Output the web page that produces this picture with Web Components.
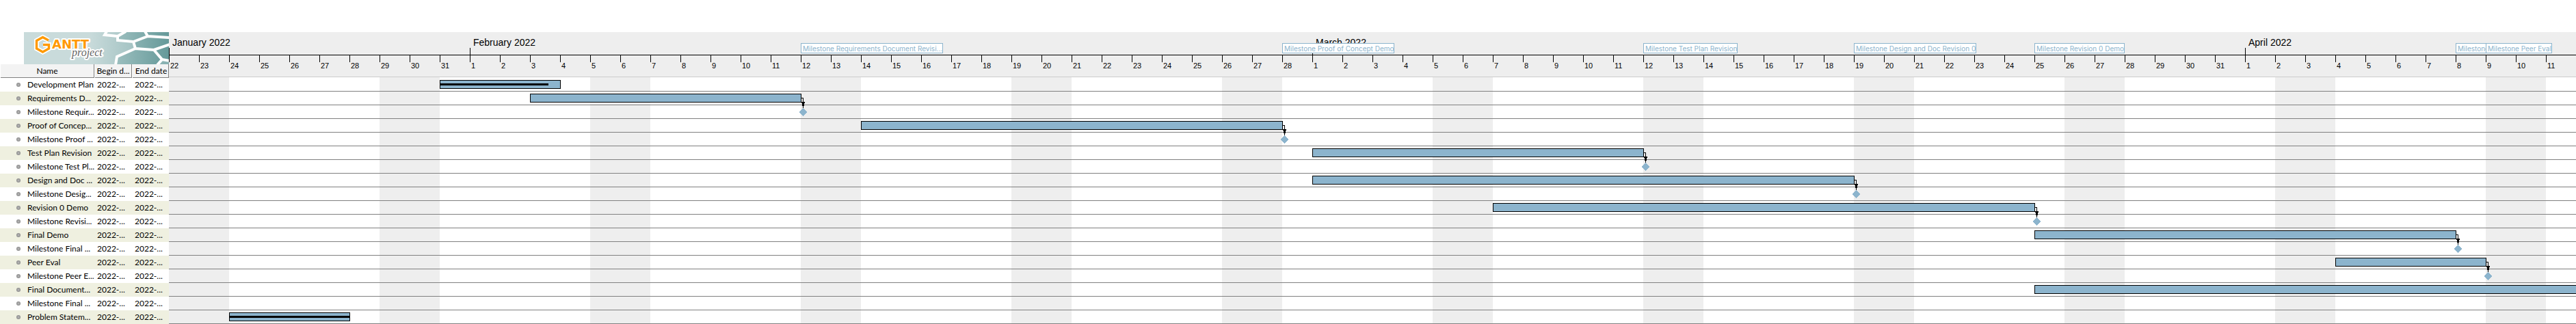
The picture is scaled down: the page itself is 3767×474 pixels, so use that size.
<!DOCTYPE html>
<html lang="en">
<head>
<meta charset="utf-8">
<title>Gantt chart</title>
<style>
  body { margin: 0; background: #fff; font-family: "Liberation Sans", Arial, sans-serif; color: #000; }
</style>
</head>
<body>
<gantt-app></gantt-app>

<script>
const DAYS = 80;
const MONTHS = [
  { name: 'January 2022', first: 22, days: 10 },
  { name: 'February 2022', first: 1, days: 28 },
  { name: 'March 2022', first: 1, days: 31 },
  { name: 'April 2022', first: 1, days: 11 },
];
// start and end are day offsets from the first day of the chart
const TASKS = [
  { name: 'Development Plan', start: 9, end: 13, progress: 90 },
  { name: 'Requirements D...', start: 12, end: 21 },
  { name: 'Milestone Requir...', at: 21, flag: 'Milestone Requirements Document Revisi...' },
  { name: 'Proof of Concep...', start: 23, end: 37 },
  { name: 'Milestone Proof ...', at: 37, flag: 'Milestone Proof of Concept Demo' },
  { name: 'Test Plan Revision', start: 38, end: 49 },
  { name: 'Milestone Test Pl...', at: 49, flag: 'Milestone Test Plan Revision' },
  { name: 'Design and Doc ...', start: 38, end: 56 },
  { name: 'Milestone Desig...', at: 56, flag: 'Milestone Design and Doc Revision 0' },
  { name: 'Revision 0 Demo', start: 44, end: 62 },
  { name: 'Milestone Revisi...', at: 62, flag: 'Milestone Revision 0 Demo' },
  { name: 'Final Demo', start: 62, end: 76 },
  { name: 'Milestone Final ...', at: 76, flag: 'Milestone' },
  { name: 'Peer Eval', start: 72, end: 77 },
  { name: 'Milestone Peer E...', at: 77, flag: 'Milestone Peer Eval' },
  { name: 'Final Document...', start: 62, end: 80 },
  { name: 'Milestone Final ...' },
  { name: 'Problem Statem...', start: 2, end: 6, progress: 100 },
];

class GanttLogo extends HTMLElement {
  constructor() {
    super();
    this.attachShadow({ mode: 'open' }).innerHTML = `
      <style>
        :host { display: block; height: 47px; }
        svg { display: block; }
        .word { font: bold 18px "DejaVu Sans", sans-serif; fill: #ff9900; }
        .sub { font: italic 16px "Liberation Serif", serif; fill: #666; }
        text { stroke: #fff; stroke-width: 4px; stroke-linejoin: round; paint-order: stroke; }
      </style>
      <svg width="212" height="47" viewBox="0 0 212 47" role="img" aria-label="GanttProject">
        <defs>
          <linearGradient id="sky"><stop offset=".45" stop-color="#c9dbdb"/><stop offset="1" stop-color="#86b0b0"/></linearGradient>
          <linearGradient id="cell"><stop offset="0" stop-color="#9cbfbf"/><stop offset="1" stop-color="#659999"/></linearGradient>
        </defs>
        <rect width="212" height="47" fill="url(#sky)"/>
        <path fill="url(#cell)" d="M148 0H177L181 6L160 14L137 12V6ZM181 6L212 7V18L190 26L163 24L160 14ZM136 36L163 24L190 26L202 40L195 47H134ZM177 0H212V7L181 6ZM190 26L212 18V42L202 40Z"/>
        <path fill="none" stroke="#fff" stroke-width="4" d="M121 -1L118 4L137 6M149 -1L137 6V12L160 14L181 6L177 -1M181 6L213 8M160 14L163 24L190 26L213 18M163 24L136 36L134 48M190 26L202 40L195 48M202 40L213 42"/>
        <g fill="none" stroke-linejoin="miter">
          <path id="g" stroke="#fff" stroke-width="7" d="M36 12L27.500 7.500L18.500 12.500V24L27.500 29L36.500 24V18.500H28"/>
          <path stroke="#ff9900" stroke-width="3.400" d="M36 12L27.500 7.500L18.500 12.500V24L27.500 29L36.500 24V18.500H28"/>
        </g>
        <text class="sub" x="70" y="35">project</text>
        <text class="word" x="41" y="24">ANTT</text>
      </svg>`;
  }
}

class TaskTable extends HTMLElement {
  constructor() {
    super();
    this.attachShadow({ mode: 'open' }).innerHTML = `
      <style>
        :host { display: block; font: 12px/20px Lato, "Open Sans", sans-serif; }
        table { width: 100%; table-layout: fixed; border-collapse: collapse; }
        .name { width: 138px; }
        .begin { width: 55px; }
        th, td { padding: 0; height: 20px; white-space: nowrap; overflow: hidden; text-align: left; }
        th { font-weight: normal; }
        th div { box-sizing: border-box; height: 20px; line-height: 20px; text-align: center;
          background: #f3f3f3; border: solid #808080; border-width: 0 1px 1px 0; margin-left: 1px; }
        th:last-child div { text-indent: 2px; }
        td { padding-left: 4px; }
        td:first-child { padding-left: 24px; }
        td i { display: inline-block; width: 6px; height: 6px; margin-right: 10px; border-radius: 50%;
          vertical-align: 1px; background: radial-gradient(#bbb, #777); }
        tbody tr:nth-child(even) { background: #eff0e0; }
      </style>
      <table>
        <colgroup><col class="name"><col class="begin"><col></colgroup>
        <thead><tr><th><div>Name</div></th><th><div>Begin d...</div></th><th><div>End date</div></th></tr></thead>
        <tbody>${TASKS.map(t => `<tr><td><i></i>${t.name}</td><td>2022-...</td><td>2022-...</td></tr>`).join('')}</tbody>
      </table>`;
  }
}

class TimeAxis extends HTMLElement {
  constructor() {
    super();
    const numbers = MONTHS.flatMap(m => Array.from({ length: m.days }, (_, i) => m.first + i));
    this.attachShadow({ mode: 'open' }).innerHTML = `
      <style>
        :host { display: block; position: relative; background: #eee; border-bottom: 1px solid #ccc; }
        .grid { display: grid; grid-template-columns: repeat(${DAYS}, minmax(0, 1fr)); }
        .months { height: 33px; border-bottom: 1px solid #000; }
        .months > div { display: flex; gap: 4px; font-size: 14px; line-height: 16px; white-space: nowrap; }
        .months > div::before { content: ""; width: 1px; height: 10px; background: #000; align-self: flex-end; }
        .months span { padding-top: 7px; }
        .days { height: 31px; font-size: 11px; line-height: 12px; }
        .days > div { display: flex; gap: 1px; }
        .days > div::before { content: ""; width: 1px; height: 10px; background: #000; }
        .days span { padding-top: 9px; }
        .flags { position: absolute; inset: 16px 0 auto; }
        .flags > div { grid-row: 1; width: max-content; height: 13px; padding-left: 2px; border: 1px solid #8cb4cd;
          background: #fff; color: #8cb4cd; font: 10px/15px Inter, sans-serif; white-space: nowrap; }
      </style>
      <div class="grid months">${MONTHS.map(m => `<div style="grid-column: span ${m.days}"><span>${m.name}</span></div>`).join('')}</div>
      <div class="grid days">${numbers.map(n => `<div><span>${n}</span></div>`).join('')}</div>
      <div class="grid flags">${TASKS.filter(t => t.flag).map(t => `<div style="grid-column: ${t.at + 1}">${t.flag}</div>`).join('')}</div>`;
  }
}

class TaskBar extends HTMLElement {
  constructor() {
    super();
    this.attachShadow({ mode: 'open' }).innerHTML = `
      <style>
        :host { display: flex; align-items: center; box-sizing: border-box; height: 13px; margin: 3px -1px 0 0;
          background: #8cb4cd; border: 1px solid #000; }
        div { height: 3px; background: #000; }
      </style>
      <div></div>`;
  }
  connectedCallback() {
    this.shadowRoot.querySelector('div').style.width = (this.getAttribute('progress') || 0) + '%';
  }
}

class MilestoneMark extends HTMLElement {
  constructor() {
    super();
    this.attachShadow({ mode: 'open' }).innerHTML = `
      <style>
        :host { display: block; margin: -12px 0 0 -4px; }
        svg { display: block; }
      </style>
      <svg width="14" height="28" viewBox="0 0 14 28" shape-rendering="crispEdges">
        <path d="M5 1h3v15h-1v-14h-2z"/>
        <path d="M5 7h5v2h-1v4h-3v-4h-1z"/>
        <path fill="#8cb4cd" d="M7 16L13 22L7 28L1 22Z"/>
      </svg>`;
  }
}

class TaskRows extends HTMLElement {
  constructor() {
    super();
    const item = t => t.at ? `<milestone-mark style="grid-column: ${t.at + 1}"></milestone-mark>`
      : t.end ? `<task-bar progress="${t.progress || 0}" style="grid-column: ${t.start + 1} / ${t.end + 1}"></task-bar>` : '';
    this.attachShadow({ mode: 'open' }).innerHTML = `
      <style>
        :host { display: block; padding-top: 1px; overflow: hidden;
          background: repeating-linear-gradient(90deg, #eee 0 2.5%, #fff 2.5% 8.75%); }
        .row { display: grid; grid-template-columns: repeat(${DAYS}, minmax(0, 1fr)); align-items: start;
          box-sizing: border-box; height: 20px; border-bottom: 1px solid #808080; }
      </style>
      ${TASKS.map(t => `<div class="row">${item(t)}</div>`).join('')}`;
  }
}

class GanttApp extends HTMLElement {
  constructor() {
    super();
    this.attachShadow({ mode: 'open' }).innerHTML = `
      <style>
        :host { display: grid; grid-template-columns: 247px minmax(0, 1fr); padding-top: 47px; }
        gantt-logo { margin-left: 35px; }
      </style>
      <aside><gantt-logo></gantt-logo><task-table></task-table></aside>
      <main><time-axis></time-axis><task-rows></task-rows></main>`;
  }
}

customElements.define('gantt-logo', GanttLogo);
customElements.define('task-table', TaskTable);
customElements.define('time-axis', TimeAxis);
customElements.define('task-bar', TaskBar);
customElements.define('milestone-mark', MilestoneMark);
customElements.define('task-rows', TaskRows);
customElements.define('gantt-app', GanttApp);
</script>
</body>
</html>
